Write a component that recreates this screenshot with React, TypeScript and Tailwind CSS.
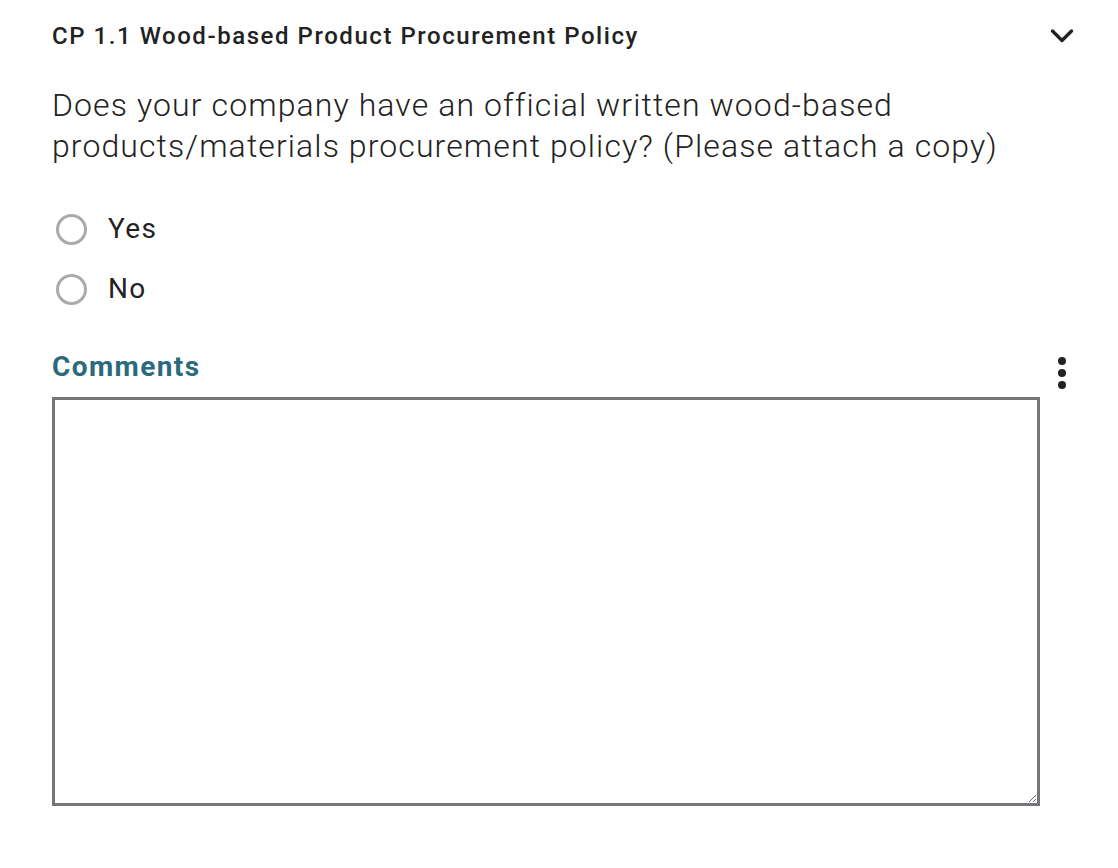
import { useState } from "react";

const options = ["Yes", "No"];

function App() {
  const [answer, setAnswer] = useState<string | null>(null);
  const [comment, setComment] = useState("");

  return (
    <div
      className="min-h-screen bg-white text-[#222] pl-[52px] pr-[44px] pt-[18px]"
      style={{ fontFamily: "Roboto, 'Liberation Sans', sans-serif" }}
    >
      <div className="flex items-center justify-between h-[36px]">
        <h2 className="text-[24px] font-medium tracking-[1.55px] text-[#222]">
          CP 1.1 Wood-based Product Procurement Policy
        </h2>
        <button aria-label="Collapse" className="text-[#222]">
          <svg width="24" height="16" viewBox="0 0 24 16" fill="none">
            <path
              d="M2.5 3L12 12.5L21.5 3"
              stroke="currentColor"
              strokeWidth="3.4"
              strokeLinecap="round"
              strokeLinejoin="round"
            />
          </svg>
        </button>
      </div>

      <p className="mt-[31px] text-[32px] font-light leading-[41px] tracking-[1.1px] text-[#222]">
        Does your company have an official written wood-based
        <br />
        products/materials procurement policy? (Please attach a copy)
      </p>

      <div className="mt-[44px] flex flex-col gap-[24px]">
        {options.map((opt) => (
          <label key={opt} className="flex items-center h-[36px] cursor-pointer">
            <span className="ml-[4px] w-[31px] h-[31px] rounded-full border-[3px] border-[#aaaaaa] flex items-center justify-center">
              {answer === opt && (
                <span className="w-[15px] h-[15px] rounded-full bg-[#2b6a7c]" />
              )}
            </span>
            <input
              type="radio"
              name="policy"
              value={opt}
              checked={answer === opt}
              onChange={() => setAnswer(opt)}
              className="sr-only"
            />
            <span className="ml-[21px] text-[28px] tracking-[1.3px] text-[#222]">
              {opt}
            </span>
          </label>
        ))}
      </div>

      <div className="mt-[38px] flex items-center justify-between w-[1014px]">
        <span className="text-[28px] font-bold tracking-[1.4px] text-[#2b6a7c]">
          Comments
        </span>
        <button
          aria-label="More options"
          className="flex flex-col gap-[4px] mt-[12px]"
        >
          <span className="w-[8px] h-[8px] rounded-full bg-[#222]" />
          <span className="w-[8px] h-[8px] rounded-full bg-[#222]" />
          <span className="w-[8px] h-[8px] rounded-full bg-[#222]" />
        </button>
      </div>

      <textarea
        value={comment}
        onChange={(e) => setComment(e.target.value)}
        className="mt-[8px] block w-[988px] h-[409px] border-[3px] border-[#76767a] p-3 text-[20px] outline-none"
      />
    </div>
  );
}

export default App;
